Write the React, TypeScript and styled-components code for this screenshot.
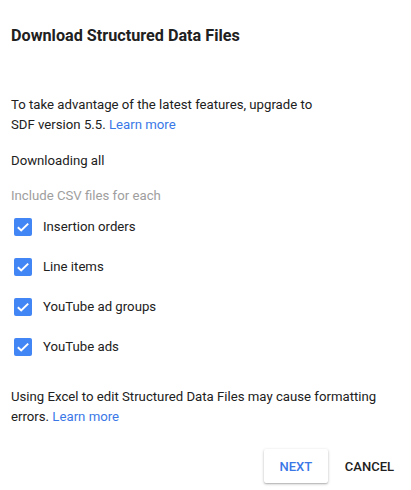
import { createGlobalStyle, styled } from 'styled-components';

const GlobalStyle = createGlobalStyle`
  body {
    margin: 0;
    background: #fff;
    font-family: Roboto, 'Liberation Sans', sans-serif;
    color: #212121;
  }
`;

const ITEMS = ['Insertion orders', 'Line items', 'YouTube ad groups', 'YouTube ads'];

function CheckIcon() {
  return (
    <svg width="18" height="18" viewBox="0 0 18 18" aria-hidden="true">
      <rect width="18" height="18" rx="2" fill="#4285f4" />
      <path d="M3.8 9.2 7.2 12.4 14.2 5.6" fill="none" stroke="#fff" strokeWidth="2" />
    </svg>
  );
}

function App() {
  return (
    <>
      <GlobalStyle />
      <Dialog>
        <Title>Download Structured Data Files</Title>
        <Body>
          <Paragraph>
            To take advantage of the latest features, upgrade to
            <br />
            SDF version 5.5. <Link href="#">Learn more</Link>
          </Paragraph>
          <Paragraph $top={16}>Downloading all</Paragraph>
          <Caption>Include CSV files for each</Caption>
          <CheckList>
            {ITEMS.map((item) => (
              <CheckRow key={item}>
                <CheckIcon />
                <span>{item}</span>
              </CheckRow>
            ))}
          </CheckList>
          <Paragraph $top={20}>
            Using Excel to edit Structured Data Files may cause formatting
            <br />
            errors. <Link href="#">Learn more</Link>
          </Paragraph>
        </Body>
        <Actions>
          <RaisedButton type="button">Next</RaisedButton>
          <FlatButton type="button">Cancel</FlatButton>
        </Actions>
      </Dialog>
    </>
  );
}

export default App;

const Dialog = styled.div`
  display: flex;
  flex-direction: column;
  width: 411px;
  height: 490px;
  padding-top: 24px;
  box-sizing: border-box;
`;

const Title = styled.h2`
  margin: 0;
  padding: 0 11px;
  font-size: 16.2px;
  line-height: 24px;
  font-weight: 700;
  color: #212121;
`;

const Body = styled.div`
  display: flex;
  flex-direction: column;
  padding: 47px 11px 0;
  font-size: 13.2px;
  line-height: 20px;
`;

const Paragraph = styled.p<{ $top?: number }>`
  margin: ${({ $top }) => $top ?? 0}px 0 0;
  color: #212121;
`;

const Link = styled.a`
  color: #3b78e7;
  text-decoration: none;
`;

const Caption = styled.div`
  margin-top: 15px;
  color: #9e9e9e;
`;

const CheckList = styled.div`
  display: flex;
  flex-direction: column;
  margin-top: 1px;
`;

const CheckRow = styled.label`
  display: flex;
  align-items: center;
  gap: 11px;
  height: 40px;
  padding-left: 3px;
  color: #212121;
`;

const Actions = styled.div`
  display: flex;
  justify-content: flex-end;
  align-items: center;
  gap: 9px;
  margin-top: 22px;
  padding-right: 9px;
`;

const ButtonBase = styled.button`
  height: 34px;
  border: none;
  border-radius: 2px;
  font-family: Roboto, 'Liberation Sans', sans-serif;
  font-size: 13px;
  font-weight: 500;
  text-transform: uppercase;
  cursor: pointer;
`;

const RaisedButton = styled(ButtonBase)`
  padding: 0 15px;
  min-width: 64px;
  background: #fff;
  color: #3b78e7;
  box-shadow: 0 1px 3px rgba(0, 0, 0, 0.25), 0 1px 1px rgba(0, 0, 0, 0.12);
`;

const FlatButton = styled(ButtonBase)`
  padding: 0 8px;
  background: transparent;
  color: #212121;
`;
